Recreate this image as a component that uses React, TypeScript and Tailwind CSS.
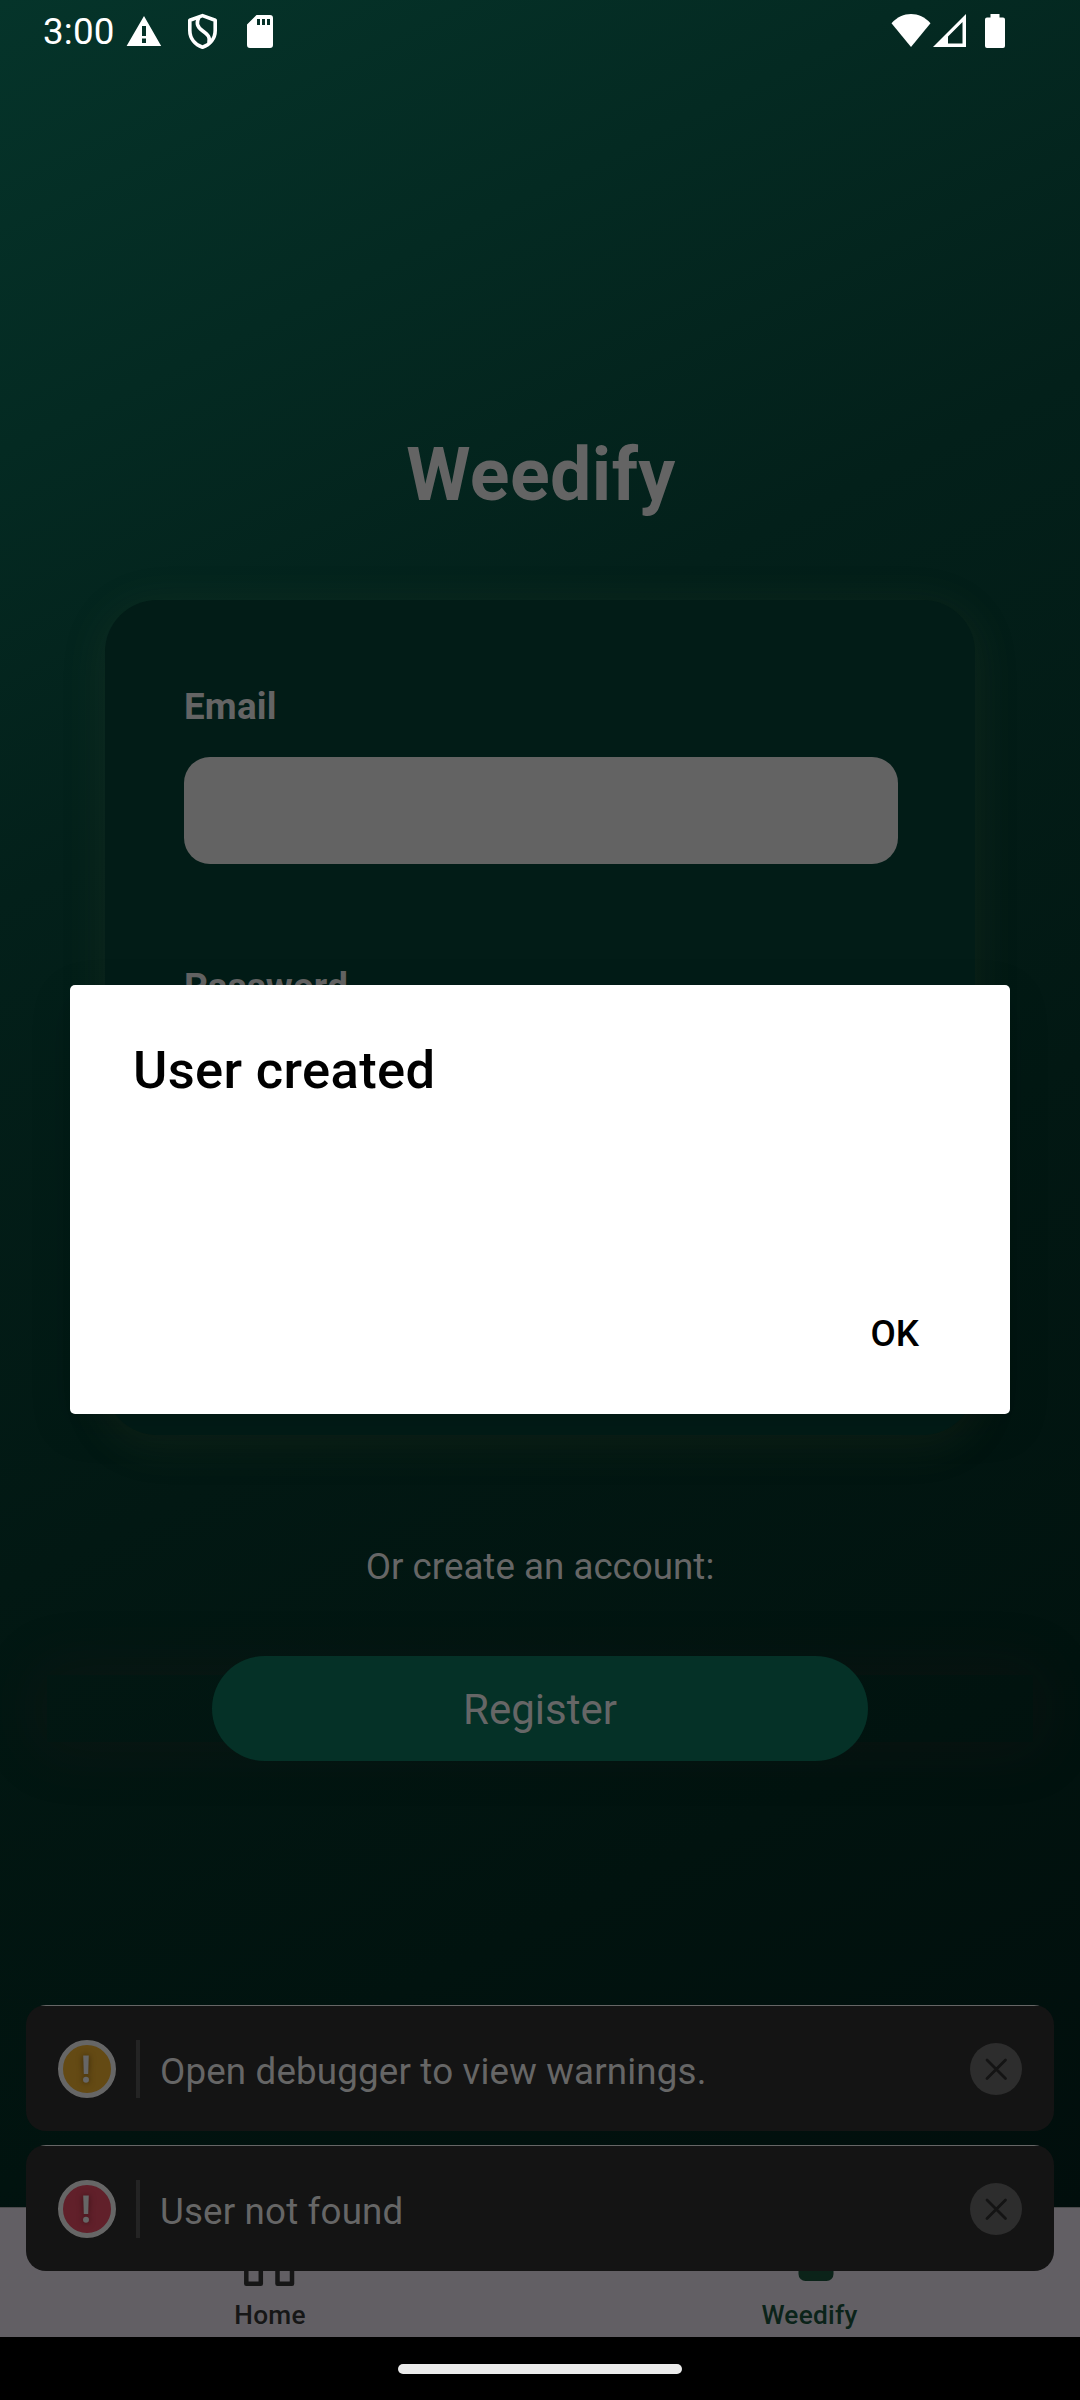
import React from "react";

function StatusBar() {
  return (
    <header className="flex h-[63px] w-full shrink-0 items-start text-white">
      <span className="ml-[43px] mt-[10px] w-[83px] text-[36.75px] leading-[44px] tracking-[0.2px]">3:00</span>
      <svg className="mt-[15px] shrink-0" width="36" height="32" viewBox="0 0 36 32" fill="currentColor">
        <path
          fillRule="evenodd"
          d="M18 1 35.2 31H.6ZM16 11v10h4V11Zm0 12.5V28h4v-4.5Z"
        />
      </svg>
      <svg className="ml-[25px] mt-[13px] shrink-0" width="32" height="37" viewBox="0 0 32 37" fill="none" stroke="currentColor" strokeWidth="3.6" strokeLinejoin="round">
        <path d="M15.5 2.6 2.8 7.3v10.2c0 8 5.2 14.4 12.7 16.8 7.500-2.400 12.700-8.800 12.700-16.800V7.300Z" />
        <path d="M12 4c-3 6-2.200 9.500 3.500 13.800 5.500 4 8 6.200 6.400 12.400" />
      </svg>
      <svg className="ml-[28px] mt-[15px] shrink-0" width="27" height="33" viewBox="0 0 27 33" fill="currentColor">
        <path fillRule="evenodd" d="M9.500 0H23a3 3 0 0 1 3 3v27a3 3 0 0 1-3 3H3a3 3 0 0 1-3-3V9.500ZM10 4v6h3V4Zm5 0v6h3V4Zm5 0v6h3V4Z" />
      </svg>
      <svg className="ml-auto mt-[14px] shrink-0" width="40" height="33" viewBox="0 0 40 33" fill="currentColor">
        <path d="M20 33 .5 9.200C6 3 13 0 20 0s14 3 19.500 9.200Z" />
      </svg>
      <svg className="ml-[2px] mt-[14px] shrink-0" width="34" height="33" viewBox="0 0 34 33" fill="currentColor">
        <path fillRule="evenodd" d="M33 0v33H0ZM29.500 8 15 22.500V29.500H29.500Z" />
      </svg>
      <svg className="ml-[18px] mr-[75px] mt-[14px] shrink-0" width="20" height="34" viewBox="0 0 20 34" fill="currentColor">
        <path d="M5.500 0h9v3.500H18a2 2 0 0 1 2 2V32a2 2 0 0 1-2 2H2a2 2 0 0 1-2-2V5.500a2 2 0 0 1 2-2h3.500Z" />
      </svg>
    </header>
  );
}

function LoginCard() {
  return (
    <section className="mt-[82px] h-[835px] w-[870px] shrink-0 rounded-[52px] bg-[#021c17] px-[79px] pt-[85px] shadow-[0_8px_40px_6px_rgba(95,100,60,0.12)]">
      <label className="block h-[44px] text-[36.75px] font-bold leading-[44px] tracking-[0.2px] text-[#646464]">Email</label>
      <div className="mt-[28px] h-[107px] w-[714px] rounded-[26px] bg-[#636363]" />
      <label className="mt-[101px] block h-[44px] text-[36.75px] font-bold leading-[44px] tracking-[0.2px] text-[#646464]">Password</label>
    </section>
  );
}

function Toast({ text, tone }: { text: string; tone: "warn" | "error" }) {
  return (
    <div className="flex h-[126px] flex-col overflow-hidden rounded-[20px] bg-[#141414]">
      <div className="mx-[14px] h-px shrink-0 bg-[#666666]" />
      <div className="flex flex-1 items-center px-[32px]">
        <div
          className={
            tone === "warn"
              ? "flex size-[58px] items-center justify-center rounded-full border-[5px] border-[#666666] bg-[#644a14]"
              : "flex size-[58px] items-center justify-center rounded-full border-[5px] border-[#666666] bg-[#61202a]"
          }
        >
          <svg
            width="12"
            height="30"
            viewBox="0 0 12 30"
            fill="#666"
            className={
              tone === "warn"
                ? "drop-shadow-[0_0_3px_rgba(50,34,6,0.9)]"
                : "drop-shadow-[0_0_3px_rgba(50,12,18,0.9)]"
            }
          >
            <path d="M2.200 1.500H7.800L7.200 20H2.800Z" />
            <circle cx="5" cy="25.700" r="3" />
          </svg>
        </div>
        <div className="ml-[20px] h-[58px] w-[4px] bg-[#242424]" />
        <span className="ml-[20px] mt-[7px] text-[36.75px] leading-[44px] tracking-[0.15px] text-[#666666]">{text}</span>
        <div className="ml-auto flex size-[52px] items-center justify-center rounded-full bg-[#2d2d2d]">
          <svg width="24" height="24" viewBox="0 0 24 24" stroke="#141414" strokeWidth="2.800" strokeLinecap="round">
            <path d="M3 3 21.500 21.500M21.500 3 3 21.500" />
          </svg>
        </div>
      </div>
    </div>
  );
}

function TabBar() {
  return (
    <nav className="flex h-[130px] w-full shrink-0 border-t border-[#4a4a4c] bg-[#625f64] text-[26.25px] font-medium leading-[32px] tracking-[0.25px]">
      <div className="flex flex-1 flex-col items-center text-[#161616]">
        <svg className="mt-[29px] shrink-0" width="52" height="50" viewBox="0 0 52 50" fill="none" stroke="currentColor" strokeWidth="4.500" strokeLinejoin="round">
          <rect x="2.300" y="2.500" width="14.500" height="14.500" />
          <rect x="33.500" y="2.500" width="14.500" height="14.500" />
          <rect x="2.300" y="31" width="14.500" height="15.800" />
          <rect x="33.500" y="31" width="14.500" height="15.800" />
        </svg>
        <span className="mt-[12px]">Home</span>
      </div>
      <div className="flex flex-1 flex-col items-center text-[#0b2319]">
        <svg className="ml-[12px] mt-[29px] shrink-0" width="36" height="50" viewBox="0 0 36 50" fill="currentColor">
          <rect x=".5" y="6" width="35" height="38" rx="7" />
        </svg>
        <span className="mr-[1px] mt-[12px]">Weedify</span>
      </div>
    </nav>
  );
}

function AlertDialog() {
  return (
    <div className="absolute left-[70px] top-[985px] flex h-[429px] w-[940px] flex-col rounded-[5px] bg-white px-[63px] pt-[54px] text-black shadow-[0_12px_40px_0_rgba(0,0,0,0.15)]">
      <h2 className="text-[52.5px] font-medium leading-[62px] tracking-[0.35px]">User created</h2>
      <button className="mr-[28px] mt-auto mb-[58px] self-end text-[36.75px] font-medium leading-[44px]">OK</button>
    </div>
  );
}

export default function App() {
  return (
    <main className="relative flex h-[2400px] w-[1080px] flex-col overflow-hidden bg-black font-[Roboto,sans-serif]">
      <div className="flex h-[2207px] w-full shrink-0 flex-col items-center bg-[linear-gradient(153.900deg,#05342a_0%,#03201a_33%,#021813_58%,#01130f_80%,#010e0c_100%)]">
        <StatusBar />
        <h1 className="mt-[369px] h-[86px] pl-[2px] text-[73.5px] font-bold leading-[86px] tracking-[0.4px] text-[#646464]">Weedify</h1>
        <LoginCard />
        <p className="mt-[110px] text-[36.75px] leading-[44px] text-[#666666]">Or create an account:</p>
        <div className="mt-[86px] flex h-[67px] w-[986px] shrink-0 items-center justify-center shadow-[0_0_60px_10px_rgba(70,20,25,0.14)]">
          <button className="h-[105px] w-[656px] shrink-0 rounded-full bg-[#053127] pt-[2px] text-[42px] leading-[50px] text-[#666666]">
            Register
          </button>
        </div>
      </div>
      <TabBar />
      <div className="flex h-[63px] w-full items-center justify-center bg-black">
        <div className="h-[10px] w-[284px] rounded-full bg-[#ebebeb]" />
      </div>
      <div className="absolute inset-x-[26px] top-[2005px] flex flex-col gap-[14px]">
        <Toast tone="warn" text="Open debugger to view warnings." />
        <Toast tone="error" text="User not found" />
      </div>
      <AlertDialog />
    </main>
  );
}
